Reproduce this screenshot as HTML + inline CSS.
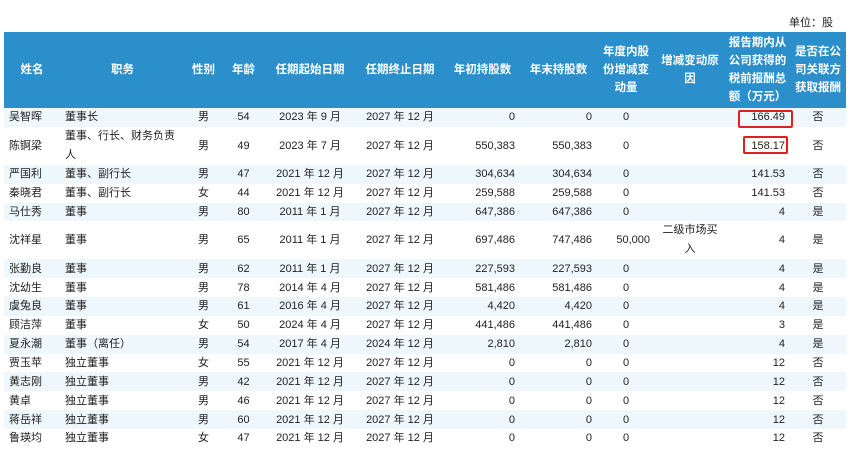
<!DOCTYPE html>
<html><head><meta charset="utf-8"><style>
body{margin:0;width:850px;height:449px;background:#fff;font-family:"Liberation Sans","Noto Sans CJK SC",sans-serif;color:#222;position:relative;overflow:hidden}
.unit{position:absolute;left:789px;top:14px;font-size:11px}
table{position:absolute;left:4px;top:32px;border-collapse:collapse;table-layout:fixed;width:842px;font-size:11px}
th{background:#2b8fcc;color:#fff;font-weight:bold;height:76px;padding:0;line-height:18px;text-align:center;font-size:11.5px}
td{padding:0 5px;height:18.85px;line-height:18px;white-space:nowrap}
tr.t td{height:37px}
tr.t td.w{white-space:normal;line-height:19px}
tbody tr:nth-child(odd) td{background:#eef8fc}
.c{text-align:center}.r{text-align:right}
.box{position:absolute;border:2px solid #e02020;border-radius:2px}
</style></head><body>
<div class="unit">单位：股</div>
<table>
<colgroup><col style="width:56px"><col style="width:125px"><col style="width:37px"><col style="width:43px"><col style="width:90px"><col style="width:90px"><col style="width:75px"><col style="width:77px"><col style="width:58px"><col style="width:70px"><col style="width:65px"><col style="width:56px"></colgroup>
<thead><tr><th>姓名</th><th>职务</th><th>性别</th><th>年龄</th><th>任期起始日期</th><th>任期终止日期</th><th>年初持股数</th><th>年末持股数</th><th>年度内股<br>份增减变<br>动量</th><th>增减变动原<br>因</th><th>报告期内从<br>公司获得的<br>税前报酬总<br>额（万元）</th><th>是否在公<br>司关联方<br>获取报酬</th></tr></thead>
<tbody>
<tr><td>吴智晖</td><td>董事长</td><td class="c">男</td><td class="c">54</td><td class="c">2023 年 9 月</td><td class="c">2027 年 12 月</td><td class="r">0</td><td class="r">0</td><td class="c">0</td><td></td><td class="r">166.49</td><td class="c">否</td></tr>
<tr class="t"><td>陈锕梁</td><td class="w">董事、行长、财务负责人</td><td class="c">男</td><td class="c">49</td><td class="c">2023 年 7 月</td><td class="c">2027 年 12 月</td><td class="r">550,383</td><td class="r">550,383</td><td class="c">0</td><td></td><td class="r">158.17</td><td class="c">否</td></tr>
<tr><td>严国利</td><td>董事、副行长</td><td class="c">男</td><td class="c">47</td><td class="c">2021 年 12 月</td><td class="c">2027 年 12 月</td><td class="r">304,634</td><td class="r">304,634</td><td class="c">0</td><td></td><td class="r">141.53</td><td class="c">否</td></tr>
<tr><td>秦晓君</td><td>董事、副行长</td><td class="c">女</td><td class="c">44</td><td class="c">2021 年 12 月</td><td class="c">2027 年 12 月</td><td class="r">259,588</td><td class="r">259,588</td><td class="c">0</td><td></td><td class="r">141.53</td><td class="c">否</td></tr>
<tr><td>马仕秀</td><td>董事</td><td class="c">男</td><td class="c">80</td><td class="c">2011 年 1 月</td><td class="c">2027 年 12 月</td><td class="r">647,386</td><td class="r">647,386</td><td class="c">0</td><td></td><td class="r">4</td><td class="c">是</td></tr>
<tr class="t"><td>沈祥星</td><td>董事</td><td class="c">男</td><td class="c">65</td><td class="c">2011 年 1 月</td><td class="c">2027 年 12 月</td><td class="r">697,486</td><td class="r">747,486</td><td class="r">50,000</td><td class="c w">二级市场买入</td><td class="r">4</td><td class="c">是</td></tr>
<tr><td>张勤良</td><td>董事</td><td class="c">男</td><td class="c">62</td><td class="c">2011 年 1 月</td><td class="c">2027 年 12 月</td><td class="r">227,593</td><td class="r">227,593</td><td class="c">0</td><td></td><td class="r">4</td><td class="c">是</td></tr>
<tr><td>沈幼生</td><td>董事</td><td class="c">男</td><td class="c">78</td><td class="c">2014 年 4 月</td><td class="c">2027 年 12 月</td><td class="r">581,486</td><td class="r">581,486</td><td class="c">0</td><td></td><td class="r">4</td><td class="c">是</td></tr>
<tr><td>虞兔良</td><td>董事</td><td class="c">男</td><td class="c">61</td><td class="c">2016 年 4 月</td><td class="c">2027 年 12 月</td><td class="r">4,420</td><td class="r">4,420</td><td class="c">0</td><td></td><td class="r">4</td><td class="c">是</td></tr>
<tr><td>顾洁萍</td><td>董事</td><td class="c">女</td><td class="c">50</td><td class="c">2024 年 4 月</td><td class="c">2027 年 12 月</td><td class="r">441,486</td><td class="r">441,486</td><td class="c">0</td><td></td><td class="r">3</td><td class="c">是</td></tr>
<tr><td>夏永潮</td><td>董事（离任）</td><td class="c">男</td><td class="c">54</td><td class="c">2017 年 4 月</td><td class="c">2024 年 12 月</td><td class="r">2,810</td><td class="r">2,810</td><td class="c">0</td><td></td><td class="r">4</td><td class="c">是</td></tr>
<tr><td>贾玉苹</td><td>独立董事</td><td class="c">女</td><td class="c">55</td><td class="c">2021 年 12 月</td><td class="c">2027 年 12 月</td><td class="r">0</td><td class="r">0</td><td class="c">0</td><td></td><td class="r">12</td><td class="c">否</td></tr>
<tr><td>黄志刚</td><td>独立董事</td><td class="c">男</td><td class="c">42</td><td class="c">2021 年 12 月</td><td class="c">2027 年 12 月</td><td class="r">0</td><td class="r">0</td><td class="c">0</td><td></td><td class="r">12</td><td class="c">否</td></tr>
<tr><td>黄卓</td><td>独立董事</td><td class="c">男</td><td class="c">46</td><td class="c">2021 年 12 月</td><td class="c">2027 年 12 月</td><td class="r">0</td><td class="r">0</td><td class="c">0</td><td></td><td class="r">12</td><td class="c">否</td></tr>
<tr><td>蒋岳祥</td><td>独立董事</td><td class="c">男</td><td class="c">60</td><td class="c">2021 年 12 月</td><td class="c">2027 年 12 月</td><td class="r">0</td><td class="r">0</td><td class="c">0</td><td></td><td class="r">12</td><td class="c">否</td></tr>
<tr><td>鲁瑛均</td><td>独立董事</td><td class="c">女</td><td class="c">47</td><td class="c">2021 年 12 月</td><td class="c">2027 年 12 月</td><td class="r">0</td><td class="r">0</td><td class="c">0</td><td></td><td class="r">12</td><td class="c">否</td></tr>
</tbody></table>
<div class="box" style="left:738px;top:110px;width:51px;height:14px"></div>
<div class="box" style="left:743px;top:136px;width:41px;height:14px"></div>
</body></html>
